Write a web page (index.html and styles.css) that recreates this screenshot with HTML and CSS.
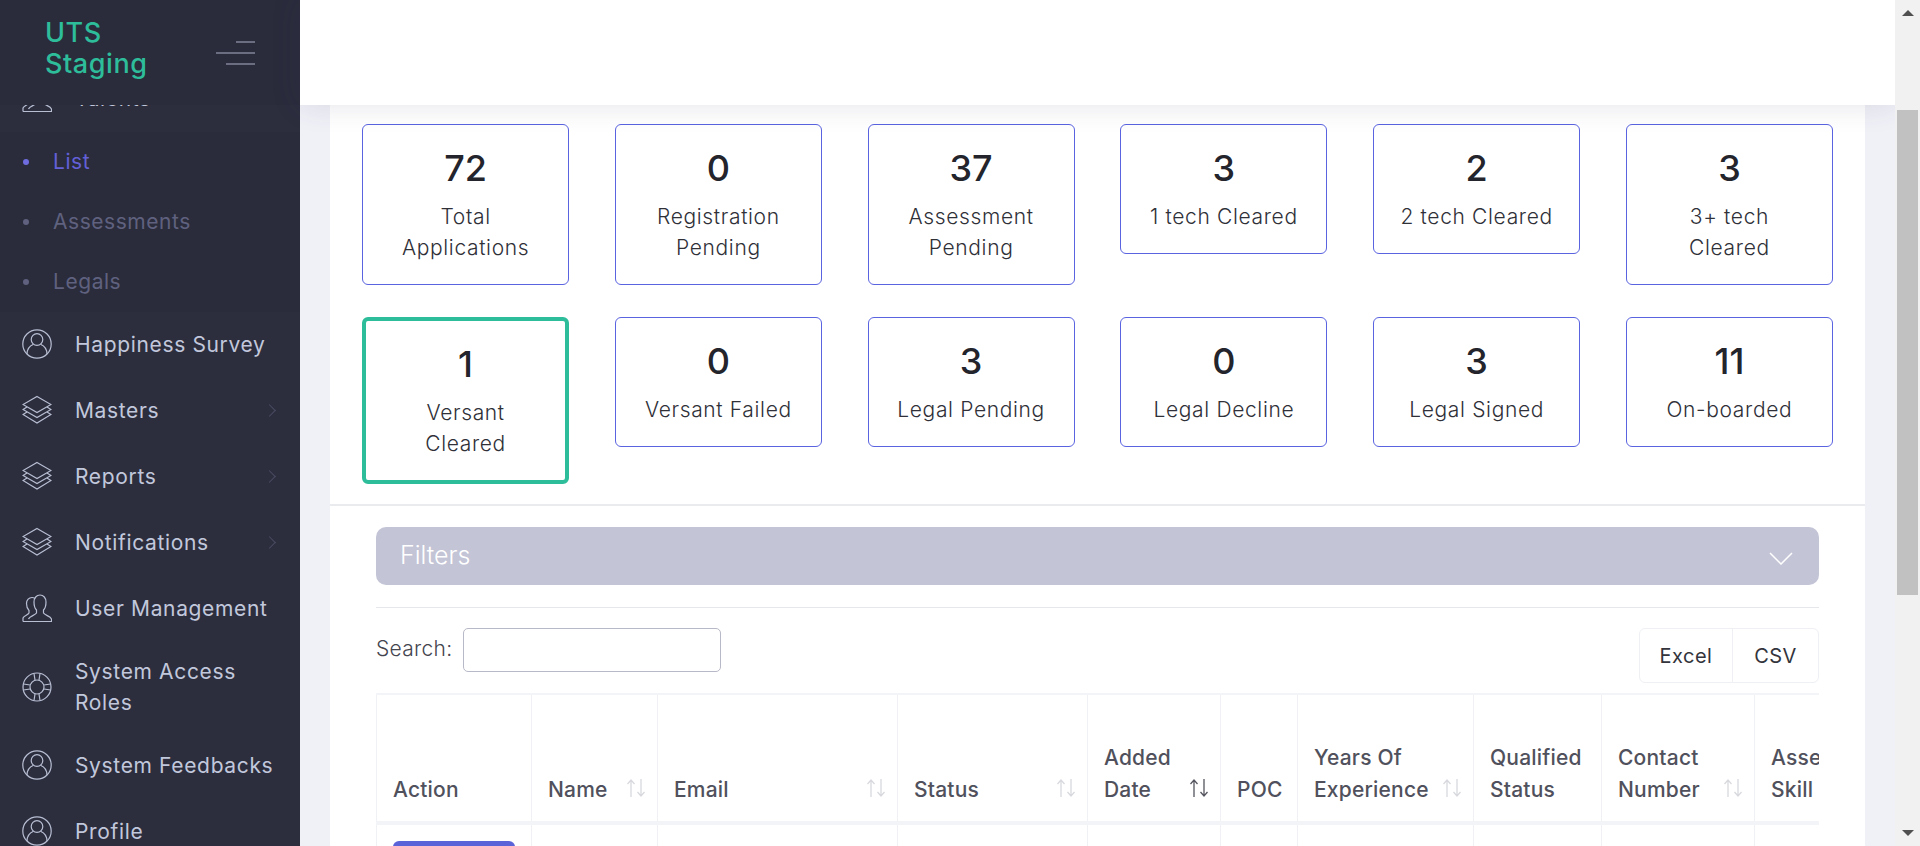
FILE: index.html
```html
<!DOCTYPE html>
<html>
<head>
	<meta charset="utf-8">
	<title>UTS Staging</title>
	<link rel="stylesheet" href="styles.css">
</head>
<body>
	<svg class="defs" width="0" height="0">
		<symbol id="i-user" viewBox="0 0 30 30">
			<circle cx="15" cy="15" r="14.200"/>
			<circle cx="15" cy="10.500" r="5.800"/>
			<path d="M5 25c0-5.500 3.500-8.500 6.500-9.800M25 25c0-5.500-3.500-8.500-6.500-9.800"/>
		</symbol>
		<symbol id="i-layers" viewBox="0 0 30 30">
			<path d="M15 1.500 29 9.500 15 17.500 1 9.500Z"/>
			<path d="M5 12 1 14.500 15 22.500 29 14.500 25 12"/>
			<path d="M5 17 1 19.500 15 28 29 19.500 25 17"/>
		</symbol>
		<symbol id="i-users" viewBox="0 0 30 30">
			<path d="M1 28.500h28.500v-2.500c-1-3-6.500-3.500-8-6v-3c2-2 2.500-4.500 2.500-8 0-4-2.500-7-6-7s-6 3-6 7c0 3.500.5 6 2.500 8v3c-1.500 2.500-7 3-8 6"/>
			<path d="M1 28.500v-3.500c1-2.500 5-3 6-5v-2.500c-1.500-1.500-2.500-4-2.500-7 0-3.500 2.500-6 5.500-6 1 0 2 .3 3 1"/>
		</symbol>
		<symbol id="i-buoy" viewBox="0 0 30 30">
			<circle cx="15" cy="15" r="14"/>
			<circle cx="15" cy="15" r="7"/>
			<path d="M12 1.500 13 8M18 1.500 17 8M12 28.500 13 22M18 28.500 17 22M1.500 12 8 13M1.500 18 8 17M28.500 12 22 13M28.500 18 22 17"/>
		</symbol>
		<symbol id="sort" viewBox="0 0 20 18">
			<path d="M5 18V1M1.500 5 5 1l3.500 4"/>
			<path d="M15 0v17M11.500 13l3.500 4 3.500-4"/>
		</symbol>
	</svg>

	<aside class="sidebar">
		<div class="brand">
			<div class="brand-name">UTS Staging</div>
			<div class="burger">
				<span class="b-short"></span>
				<span class="b-long"></span>
				<span class="b-mid"></span>
			</div>
		</div>
		<nav class="nav">
			<div class="nav-inner">
				<a class="item"><svg class="icon"><use href="#i-users"/></svg><span>Talents</span></a>
				<div class="submenu">
					<a class="sub active">List</a>
					<a class="sub">Assessments</a>
					<a class="sub">Legals</a>
				</div>
				<a class="item"><svg class="icon"><use href="#i-user"/></svg><span>Happiness Survey</span></a>
				<a class="item"><svg class="icon"><use href="#i-layers"/></svg><span>Masters</span><i class="caret"></i></a>
				<a class="item"><svg class="icon"><use href="#i-layers"/></svg><span>Reports</span><i class="caret"></i></a>
				<a class="item"><svg class="icon"><use href="#i-layers"/></svg><span>Notifications</span><i class="caret"></i></a>
				<a class="item"><svg class="icon"><use href="#i-users"/></svg><span>User Management</span></a>
				<a class="item two-line"><svg class="icon"><use href="#i-buoy"/></svg><span>System Access<br>Roles</span></a>
				<a class="item"><svg class="icon"><use href="#i-user"/></svg><span>System Feedbacks</span></a>
				<a class="item"><svg class="icon"><use href="#i-user"/></svg><span>Profile</span></a>
			</div>
		</nav>
	</aside>

	<div class="main">
		<header class="topbar"></header>
		<div class="content">
			<div class="card">
				<div class="stats">
					<div class="stat"><div class="num">72</div><div class="label">Total Applications</div></div>
					<div class="stat"><div class="num">0</div><div class="label">Registration Pending</div></div>
					<div class="stat"><div class="num">37</div><div class="label">Assessment Pending</div></div>
					<div class="stat"><div class="num">3</div><div class="label">1 tech Cleared</div></div>
					<div class="stat"><div class="num">2</div><div class="label">2 tech Cleared</div></div>
					<div class="stat"><div class="num">3</div><div class="label">3+ tech Cleared</div></div>
					<div class="stat selected"><div class="num">1</div><div class="label">Versant Cleared</div></div>
					<div class="stat"><div class="num">0</div><div class="label">Versant Failed</div></div>
					<div class="stat"><div class="num">3</div><div class="label">Legal Pending</div></div>
					<div class="stat"><div class="num">0</div><div class="label">Legal Decline</div></div>
					<div class="stat"><div class="num">3</div><div class="label">Legal Signed</div></div>
					<div class="stat"><div class="num">11</div><div class="label">On-boarded</div></div>
				</div>

				<div class="section">
					<div class="filters">
						<span>Filters</span>
						<svg class="filters-arrow" width="24" height="13" viewBox="0 0 24 13"><path d="M1 1l11 11L23 1"/></svg>
					</div>
					<div class="rule"></div>
					<div class="toolbar">
						<label class="search"><span>Search:</span> <input type="text"></label>
						<div class="export">
							<button>Excel</button>
							<button>CSV</button>
						</div>
					</div>
					<div class="table-wrap">
						<table>
							<colgroup>
								<col class="c-action"><col class="c-name"><col class="c-email"><col class="c-status"><col class="c-date">
								<col class="c-poc"><col class="c-years"><col class="c-qual"><col class="c-phone"><col class="c-skill">
							</colgroup>
							<thead>
								<tr>
									<th><div class="th">Action</div></th>
									<th><div class="th">Name <svg class="sort"><use href="#sort"/></svg></div></th>
									<th><div class="th">Email <svg class="sort"><use href="#sort"/></svg></div></th>
									<th><div class="th">Status <svg class="sort"><use href="#sort"/></svg></div></th>
									<th><div class="th">Added<br>Date <svg class="sort sort-down"><use href="#sort"/></svg></div></th>
									<th><div class="th">POC</div></th>
									<th><div class="th">Years Of<br>Experience <svg class="sort"><use href="#sort"/></svg></div></th>
									<th><div class="th">Qualified<br>Status</div></th>
									<th><div class="th">Contact<br>Number <svg class="sort"><use href="#sort"/></svg></div></th>
									<th><div class="th">Assessment<br>Skill</div></th>
								</tr>
							</thead>
							<tbody>
								<tr>
									<td><button class="row-btn">View</button></td>
									<td></td><td></td><td></td><td></td><td></td><td></td><td></td><td></td><td></td>
								</tr>
							</tbody>
						</table>
					</div>
				</div>
			</div>
		</div>
	</div>

	<div class="scrollbar">
		<div class="arrow-up"></div>
		<div class="thumb"></div>
		<div class="arrow-down"></div>
	</div>
</body>
</html>
```
FILE: styles.css
```css
html, body {
	height: 100%;
	margin: 0;
	overflow: hidden;
}
body {
	display: flex;
	font-family: "Inter", "Liberation Sans", sans-serif;
	font-size: 21px;
	background: #f0f1f7;
	color: #333;
}
.defs {
	position: absolute;
}

/* sidebar */
.sidebar {
	width: 300px;
	flex: none;
	display: flex;
	flex-direction: column;
	background: #2c2e3e;
	color: #c2c8dc;
}
.brand {
	height: 105px;
	flex: none;
	display: flex;
	align-items: center;
	justify-content: space-between;
	padding: 0 45px 10px 45px;
	box-sizing: border-box;
	background: #2a2c3c;
}
.brand-name {
	width: 120px;
	font-size: 27px;
	line-height: 31px;
	font-weight: 500;
	color: #2ebd9b;
	letter-spacing: .55px;
}
.burger {
	width: 39px;
	display: flex;
	flex-direction: column;
	align-items: flex-end;
	gap: 9px;
	margin-top: 10px;
}
.burger span {
	display: block;
	height: 2px;
	background: #6b6d80;
}
.b-short { width: 19px; }
.b-long { width: 39px; }
.b-mid { width: 29px; }
.nav {
	flex: 1;
	overflow: hidden;
}
.nav-inner {
	margin-top: -39px;
}
.item {
	display: flex;
	align-items: center;
	padding: 14px 26px 16px 22px;
	min-height: 36px;
	line-height: 31px;
	letter-spacing: .65px;
}
.two-line {
	padding-bottom: 15px;
}
.icon {
	width: 30px;
	height: 30px;
	flex: none;
	margin-right: 23px;
	fill: none;
	stroke: #b9bfd3;
	stroke-width: 1.200;
}
.caret {
	width: 8px;
	height: 8px;
	margin-left: auto;
	border-top: 1px solid #4a4c62;
	border-right: 1px solid #4a4c62;
	transform: rotate(45deg);
}
.submenu {
	background: #2a2c3b;
}
.sub {
	display: block;
	position: relative;
	height: 60px;
	line-height: 60px;
	padding-left: 53px;
	color: #5f617f;
	letter-spacing: .55px;
}
.sub::before {
	content: "";
	position: absolute;
	left: 23px;
	top: 27px;
	width: 6px;
	height: 6px;
	border-radius: 50%;
	background: #5f617f;
}
.sub.active {
	color: #6360d8;
}
.sub.active::before {
	background: #6f6ce0;
}

/* main column */
.main {
	flex: 1;
	min-width: 0;
	display: flex;
	flex-direction: column;
}
.topbar {
	height: 105px;
	flex: none;
	background: #fff;
	position: relative;
	z-index: 2;
	box-shadow: 0 0 28px rgba(60, 60, 90, .14);
}
.content {
	flex: 1;
	overflow: hidden;
	padding: 0 30px;
}
.card {
	background: #fff;
	padding-top: 19px;
}
.stats {
	display: grid;
	grid-template-columns: repeat(6, 1fr);
	grid-template-rows: 160px auto;
	column-gap: 45.600px;
	row-gap: 33px;
	align-items: start;
	padding: 0 32px 20px;
	border-bottom: 2px solid #eaebee;
}
.stat {
	border: 1px solid #5a63e0;
	border-radius: 6px;
	padding: 16px 22px 21px;
	text-align: center;
}
.stat.selected {
	border: 4px solid #2ebd9b;
}
.num {
	font-size: 36px;
	line-height: 54px;
	font-weight: 500;
	color: #23242c;
	margin-bottom: 6px;
}
.label {
	line-height: 31px;
	font-weight: 300;
	color: #2f3038;
	letter-spacing: .65px;
}

/* filters and table */
.section {
	padding: 21px 46px 0;
}
.filters {
	height: 58px;
	display: flex;
	align-items: center;
	justify-content: space-between;
	padding: 0 26px 0 24px;
	border-radius: 10px;
	background: #c3c4d6;
	color: #fff;
	font-size: 25px;
	font-weight: 300;
}
.filters span {
	margin-top: -2px;
}
.filters-arrow {
	margin-top: 4px;
	fill: none;
	stroke: #fff;
	stroke-width: 1.500;
}
.rule {
	margin-top: 22px;
	border-top: 1.500px solid #e6e7eb;
}
.toolbar {
	display: flex;
	justify-content: space-between;
	align-items: flex-start;
	margin-top: 20px;
	height: 55px;
}
.search {
	display: flex;
	align-items: center;
	gap: 10px;
	font-weight: 300;
	color: #44454f;
	letter-spacing: .3px;
}
.search span {
	margin-bottom: 4px;
}
.search input {
	width: 258px;
	height: 44px;
	box-sizing: border-box;
	border: 1px solid #b8b9c8;
	border-radius: 5px;
	background: #fff;
}
.export {
	display: flex;
	height: 55px;
	box-sizing: border-box;
	border: 1.500px solid #eff0f4;
	border-radius: 6px;
}
.export button {
	width: 92px;
	padding: 0;
	border: 0;
	background: none;
	font: inherit;
	font-size: 20px;
	font-weight: 400;
	color: #33343c;
	letter-spacing: .5px;
}
.export button + button {
	width: 86px;
	border-left: 1.500px solid #eff0f4;
}
.table-wrap {
	margin-top: 10px;
	overflow: hidden;
}
table {
	width: 1600px;
	table-layout: fixed;
	border-collapse: collapse;
}
.c-action { width: 155px; }
.c-name { width: 126px; }
.c-email { width: 240px; }
.c-status { width: 190px; }
.c-date { width: 133px; }
.c-poc { width: 77px; }
.c-years { width: 176px; }
.c-qual { width: 128px; }
.c-phone { width: 153px; }
.c-skill { width: 222px; }
thead tr {
	border-top: 2px solid #f3f4f8;
	border-bottom: 4px solid #f3f4f8;
}
th, td {
	border-left: 1.500px solid #f0f1f5;
	padding: 0 11px 0 16px;
	vertical-align: bottom;
}
th {
	height: 129px;
	padding-bottom: 15px;
	box-sizing: border-box;
	font-weight: 500;
	font-size: 21px;
	line-height: 32px;
	color: #50515c;
	text-align: left;
	white-space: nowrap;
	letter-spacing: .2px;
}
.th {
	position: relative;
}
.sort {
	position: absolute;
	right: 0;
	bottom: 9px;
	width: 20px;
	height: 18px;
	fill: none;
	stroke: #d8d9de;
	stroke-width: 1.300;
}
.sort-down {
	stroke: #55565f;
}
td {
	height: 60px;
	padding-top: 16px;
	vertical-align: top;
}
.row-btn {
	width: 122px;
	height: 44px;
	border: 0;
	border-radius: 6px;
	background: #5a63d8;
	color: #fff;
	font: inherit;
}

/* page scrollbar */
.scrollbar {
	width: 25px;
	flex: none;
	display: flex;
	flex-direction: column;
	align-items: center;
	background: #f1f1f1;
	position: relative;
	z-index: 3;
}
.arrow-up, .arrow-down {
	width: 0;
	height: 0;
	border-left: 6px solid transparent;
	border-right: 6px solid transparent;
}
.arrow-up {
	margin-top: 10px;
	border-bottom: 6px solid #505050;
}
.arrow-down {
	margin-top: auto;
	margin-bottom: 10px;
	border-top: 6px solid #505050;
}
.thumb {
	width: 21px;
	height: 485px;
	margin-top: 94px;
	background: #c1c1c1;
}
```
